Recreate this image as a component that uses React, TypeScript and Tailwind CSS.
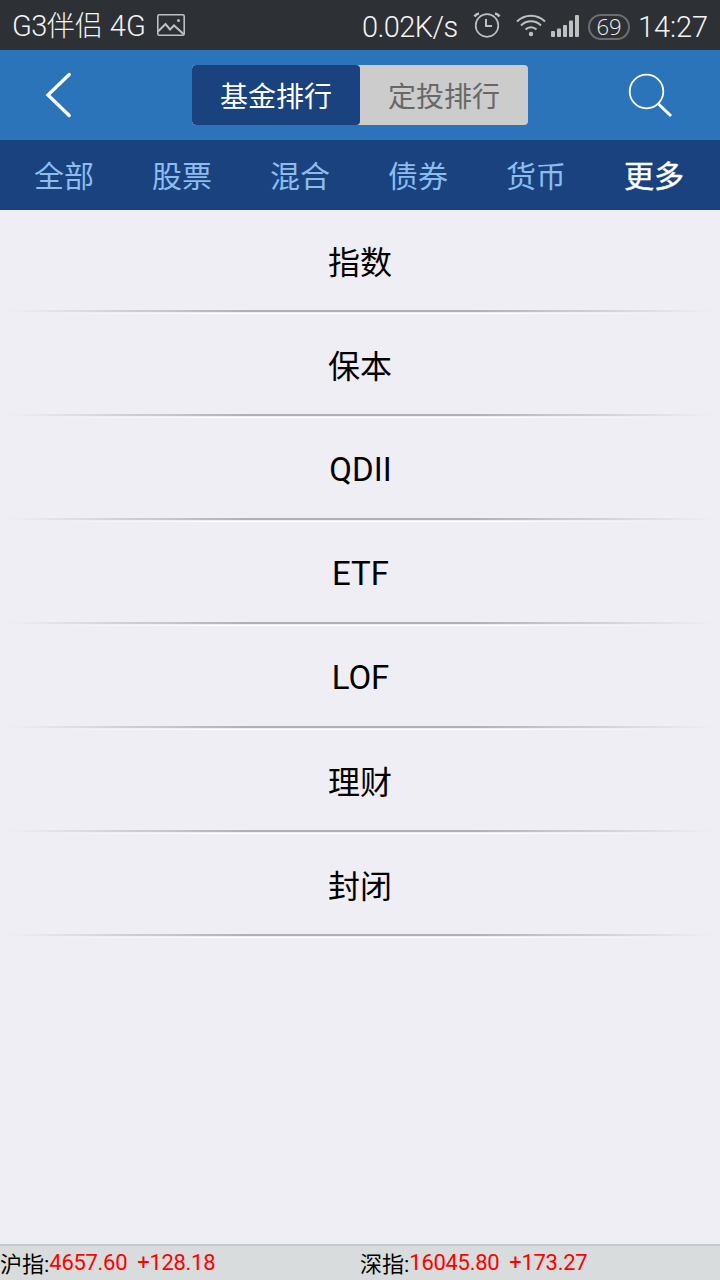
import React from "react";

const tabs = ["全部", "股票", "混合", "债券", "货币", "更多"];
const categories = ["指数", "保本", "QDII", "ETF", "LOF", "理财", "封闭"];
const indexes = [
    { name: "沪指", value: "4657.60", change: "+128.18" },
    { name: "深指", value: "16045.80", change: "+173.27" },
];

const StatusBar = () => (
    <div className="flex h-[50px] items-center bg-[#2d3035] pl-3 font-light text-[#f4f4f4]">
        <span className="w-[145px] whitespace-nowrap pt-[3px] text-[28px] leading-[50px]">
            <span className="text-[29px] tracking-[-0.6px]">G3</span>伴侣<span className="text-[29px]"> 4G</span>
        </span>
        <svg className="h-[22px] w-[28px] shrink-0" viewBox="0 0 28 22" fill="none" stroke="#bfc0c2" strokeWidth="1.6">
            <rect x="0.8" y="0.8" width="26.4" height="20.4" rx="1.5" />
            <path d="M1 17.5 8.5 10l4.5 5.5 4-4 9.5 8.5" strokeWidth="2" />
            <circle cx="21.5" cy="6.5" r="1.5" fill="#bfc0c2" stroke="none" />
        </svg>
        <span className="ml-[177px] w-[111px] whitespace-nowrap pt-[5px] text-[29px] tracking-[-0.6px]">0.02K/s</span>
        <svg className="mb-[1px] h-[26px] w-[28px] shrink-0" viewBox="0 0 28 26" fill="none" stroke="#bfc0c2" strokeWidth="1.7">
            <circle cx="14" cy="13.5" r="11.3" />
            <path d="M13 7v7h6" strokeWidth="2" />
            <path d="M1.5 4.5Q3 2 6 1.5M26.5 4.5Q25 2 22 1.5" strokeWidth="2.6" />
        </svg>
        <svg className="ml-[15px] h-[24px] w-[30px] shrink-0" viewBox="0 0 30 24" fill="none" stroke="#bfc0c2" strokeWidth="2">
            <path d="M1 8.5a19.8 19.8 0 0 1 28 0M5 12.5a14.1 14.1 0 0 1 20 0M9.5 16.5a7.8 7.8 0 0 1 11 0" />
            <circle cx="15" cy="21" r="2.2" fill="#bfc0c2" stroke="none" />
        </svg>
        <svg className="ml-[5px] mt-[2px] h-[22px] w-[28px] shrink-0" viewBox="0 0 28 22" fill="#bfc0c2">
            <rect x="0" y="16" width="4" height="6" rx="1" />
            <rect x="6" y="13.5" width="4" height="8.5" rx="1" />
            <rect x="12" y="10" width="4" height="12" rx="1" />
            <rect x="18" y="5.5" width="4" height="16.5" rx="1" />
            <rect x="24" y="0" width="4" height="22" rx="1" />
        </svg>
        <span className="ml-[9px] mt-[4px] flex h-[26px] w-[42px] shrink-0 items-center justify-center rounded-full border-2 border-[#6c6e72] pb-0.5 font-['Open_Sans'] text-[22px] leading-none">
            69
        </span>
        <span className="ml-[8px] whitespace-nowrap pt-[5px] text-[29px] tracking-[-0.1px]">14:27</span>
    </div>
);

const Header = () => (
    <header className="flex h-[90px] items-center bg-[#2b74ba]">
        <button className="ml-[44px]">
            <svg className="h-[46px] w-[28px]" viewBox="0 0 28 46" fill="none" stroke="white" strokeWidth="3.3">
                <path d="M25.2 2.5 4 23l21.2 20.5" strokeLinecap="round" />
            </svg>
        </button>
        <div className="ml-[120px] flex h-[60px] w-[336px] overflow-hidden rounded bg-[#cccccc] text-[28px]">
            <button className="w-1/2 rounded bg-[#19427e] pt-1.5 text-white">基金排行</button>
            <button className="w-1/2 pt-1.5 text-[#686868]">定投排行</button>
        </div>
        <button className="ml-[100px] pt-px">
            <svg className="h-[46px] w-[46px]" viewBox="0 0 46 46" fill="none" stroke="white">
                <circle cx="18.5" cy="18.5" r="16.8" strokeWidth="1.8" />
                <path d="m30.5 31 12.5 12" strokeWidth="3" />
            </svg>
        </button>
    </header>
);

const App: React.FC = () => {
    return (
        <div className="flex h-[1280px] w-[720px] flex-col overflow-hidden bg-[#efeef4] font-[Roboto,'Noto_Sans_CJK_SC',sans-serif]">
            <StatusBar />
            <Header />
            <nav className="flex h-[70px] bg-[#19427e] pl-[5px] pr-[7px] text-[30px] text-[#8cbcf0]">
                {tabs.map((tab) => (
                    <button
                        key={tab}
                        className={`flex-1 pt-[3px] ${tab === "更多" ? "text-white [-webkit-text-stroke:0.4px_white]" : ""}`}
                    >
                        {tab}
                    </button>
                ))}
            </nav>
            <main className="flex-1">
                {categories.map((category) => (
                    <div key={category} className="text-center text-black">
                        {/^[A-Z]+$/.test(category) ? (
                            <div className="h-[100px] pl-px pt-[2px] text-[33px] leading-[100px]">{category}</div>
                        ) : (
                            <div className="h-[100px] pt-[3px] text-[32px] leading-[100px]">{category}</div>
                        )}
                        <div className="h-[2px] bg-[linear-gradient(to_right,transparent_1%,#b0afb4_35%,#b0afb4_65%,transparent_99%)]" />
                        <div className="mt-px h-px bg-[linear-gradient(to_right,transparent_5%,white_35%,white_65%,transparent_95%)]" />
                    </div>
                ))}
            </main>
            <footer className="flex h-9 border-t-2 border-[#c5c8cc] bg-[#d8dcdd] text-[22px] leading-[34px] text-black">
                {indexes.map((item) => (
                    <div key={item.name} className="flex w-1/2 whitespace-nowrap">
                        <span className="pt-0.5">{item.name}:</span>
                        <span className="tracking-[-0.3px] text-[#ff0000]">{item.value}</span>
                        <span className="ml-[10px] tracking-[-0.3px] text-[#ff0000]">{item.change}</span>
                    </div>
                ))}
            </footer>
        </div>
    );
};

export default App;
